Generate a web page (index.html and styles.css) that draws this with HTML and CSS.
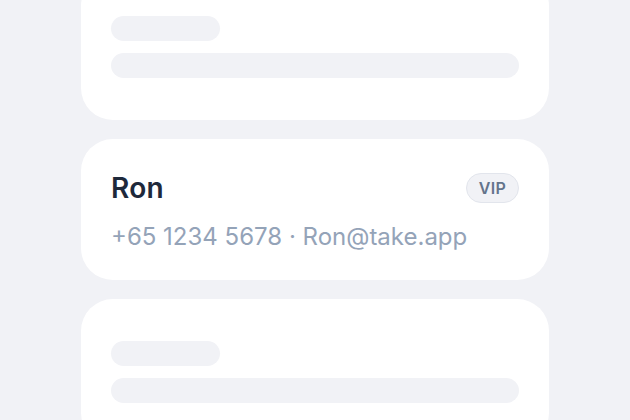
FILE: index.html
```html
<!DOCTYPE html>
<html lang="en">
<head>
    <meta charset="UTF-8">
    <meta name="viewport" content="width=device-width, initial-scale=1.0">
    <title>Customers</title>
    <link rel="stylesheet" href="styles.css">
</head>
<body>

<div class="list">
    <!-- loading placeholder -->
    <div class="card skeleton">
        <div class="bar short"></div>
        <div class="bar long"></div>
    </div>

    <div class="card customer">
        <div class="customer-top">
            <span class="name">Ron</span>
            <span class="badge">VIP</span>
        </div>
        <p class="contact">+65 1234 5678 · Ron@take.app</p>
    </div>

    <div class="card skeleton">
        <div class="bar short"></div>
        <div class="bar long"></div>
    </div>
</div>

</body>
</html>
```

FILE: styles.css
```css
body {
    margin: 0;
    background-color: #f1f2f6;
    font-family: Inter, "Noto Sans", Arial, sans-serif;
}
.list {
    width: 468px;
    margin: -26px auto 0;
    display: flex;
    flex-direction: column;
    gap: 19px;
}
.card {
    background-color: #ffffff;
    border-radius: 32px;
    padding: 0 30px;
}
.skeleton {
    display: flex;
    flex-direction: column;
    gap: 12px;
    padding-top: 42px;
    padding-bottom: 42px;
}
.bar {
    height: 25px;
    border-radius: 13px;
    background-color: #f1f2f6;
}
.bar.short {
    width: 109px;
}
.customer {
    padding-top: 33px;
    padding-bottom: 28px;
}
.customer-top {
    display: flex;
    justify-content: space-between;
    align-items: center;
    height: 32px;
}
.name {
    font-size: 28px;
    line-height: 32px;
    font-weight: 600;
    letter-spacing: 0.3px;
    color: #1e293b;
}
.badge {
    box-sizing: border-box;
    height: 30px;
    width: 53px;
    border: 1px solid #e2e5ec;
    border-radius: 15px;
    background-color: #f1f2f6;
    color: #64748b;
    font-size: 16px;
    font-weight: 600;
    letter-spacing: 0.4px;
    display: flex;
    align-items: center;
    justify-content: center;
}
.contact {
    margin: 18px 0 0;
    font-size: 24px;
    line-height: 30px;
    color: #94a3b8;
}
```
